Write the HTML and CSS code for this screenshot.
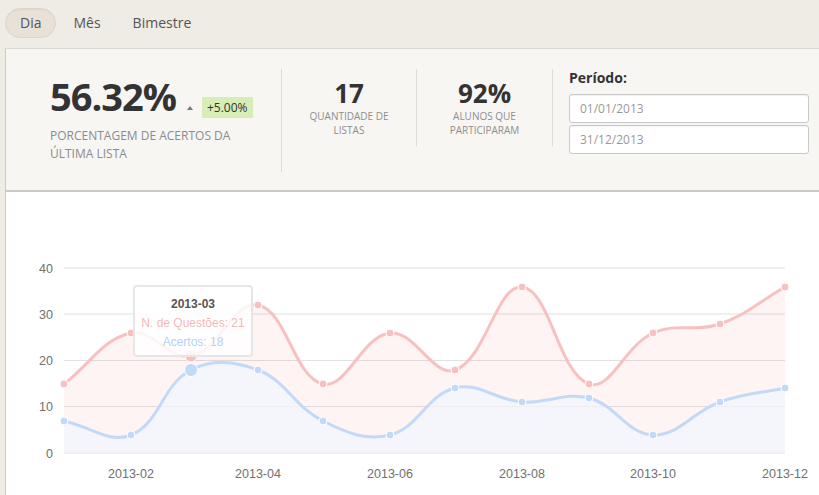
FILE: index.html
```html
<!DOCTYPE html>
<html lang="pt-BR">
<head>
<meta charset="utf-8">
<title>Desempenho</title>
<link rel="stylesheet" href="styles.css">
</head>
<body>
<nav class="tabs">
  <a class="tab active">Dia</a>
  <a class="tab">Mês</a>
  <a class="tab">Bimestre</a>
</nav>
<main class="card">
  <section class="summary">
    <div class="stat-main">
      <div class="main-row">
        <span class="big">56.32%</span>
        <span class="caret"></span>
        <span class="badge">+5.00%</span>
      </div>
      <p class="main-label">Porcentagem de acertos da última lista</p>
    </div>
    <div class="stat-small">
      <div class="num">17</div>
      <p class="small-label">Quantidade de listas</p>
    </div>
    <div class="stat-small wide">
      <div class="num">92%</div>
      <p class="small-label">Alunos que participaram</p>
    </div>
    <div class="period">
      <label class="period-label">Período:</label>
      <input class="date" type="text" value="01/01/2013">
      <input class="date" type="text" value="31/12/2013">
    </div>
  </section>
  <section class="chart">
    <svg class="plot" width="813" height="303" viewBox="6 192 813 303" xmlns="http://www.w3.org/2000/svg">
      <g class="grid">
        <line x1="64" y1="268" x2="785" y2="268"/>
        <line x1="64" y1="314" x2="785" y2="314"/>
        <line x1="64" y1="360.5" x2="785" y2="360.5"/>
        <line x1="64" y1="406.5" x2="785" y2="406.5"/>
        <line x1="64" y1="453" x2="785" y2="453"/>
      </g>
      <g class="axis-label y-labels">
        <text x="53" y="272.5">40</text>
        <text x="53" y="318.5">30</text>
        <text x="53" y="365">20</text>
        <text x="53" y="411">10</text>
        <text x="53" y="457.5">0</text>
      </g>
      <g class="axis-label x-labels">
        <text x="131" y="477.5">2013-02</text>
        <text x="258" y="477.5">2013-04</text>
        <text x="390" y="477.5">2013-06</text>
        <text x="522" y="477.5">2013-08</text>
        <text x="653" y="477.5">2013-10</text>
        <text x="785" y="477.5">2013-12</text>
      </g>
      <path class="fill-pink" d="M64,384 C90.8,363.6 102.2,339.4 131,333 C153,328.2 169,360.9 191,356 C219.8,349.6 234.2,299.9 258,305 C287,311.1 294,377.9 323,384 C346.8,389.1 362,336 390,333 C414.8,330.4 433.2,377.6 455,370 C486,359.2 496.5,284.3 522,287 C550.1,289.9 558.1,373.1 589,384 C610.5,391.5 624.3,346.1 653,333 C676.7,322.1 694.9,332.7 720,324 C747.7,314.3 759,301.8 785,287 L785,453 L64,453 Z"/>
      <path class="fill-blue" d="M64,421 C90.8,426.6 108.9,443.9 131,435 C159.7,423.5 162.1,384.8 191,370 C212.9,358.8 234.4,360.9 258,370 C287.2,381.3 294.1,406.8 323,421 C346.9,432.8 365.7,441.1 390,435 C418.5,427.9 426.5,395.1 455,388 C479.3,381.9 494.9,400 522,402 C548.5,404 564.1,391.7 589,398 C616.5,404.9 626.9,434.2 653,435 C679.3,435.8 692.1,411.9 720,402 C744.9,393.1 759,393.6 785,388 L785,453 L64,453 Z"/>
      <path class="line-pink" d="M64,384 C90.8,363.6 102.2,339.4 131,333 C153,328.2 169,360.9 191,356 C219.8,349.6 234.2,299.9 258,305 C287,311.1 294,377.9 323,384 C346.8,389.1 362,336 390,333 C414.8,330.4 433.2,377.6 455,370 C486,359.2 496.5,284.3 522,287 C550.1,289.9 558.1,373.1 589,384 C610.5,391.5 624.3,346.1 653,333 C676.7,322.1 694.9,332.7 720,324 C747.7,314.3 759,301.8 785,287"/>
      <path class="line-blue" d="M64,421 C90.8,426.6 108.9,443.9 131,435 C159.7,423.5 162.1,384.8 191,370 C212.9,358.8 234.4,360.9 258,370 C287.2,381.3 294.1,406.8 323,421 C346.9,432.8 365.7,441.1 390,435 C418.5,427.9 426.5,395.1 455,388 C479.3,381.9 494.9,400 522,402 C548.5,404 564.1,391.7 589,398 C616.5,404.9 626.9,434.2 653,435 C679.3,435.8 692.1,411.9 720,402 C744.9,393.1 759,393.6 785,388"/>
      <g class="pts-pink">
        <circle cx="64" cy="384" r="4"/>
        <circle cx="131" cy="333" r="4"/>
        <circle cx="191" cy="356" r="6"/>
        <circle cx="258" cy="305" r="4"/>
        <circle cx="323" cy="384" r="4"/>
        <circle cx="390" cy="333" r="4"/>
        <circle cx="455" cy="370" r="4"/>
        <circle cx="522" cy="287" r="4"/>
        <circle cx="589" cy="384" r="4"/>
        <circle cx="653" cy="333" r="4"/>
        <circle cx="720" cy="324" r="4"/>
        <circle cx="785" cy="287" r="4"/>
      </g>
      <g class="pts-blue">
        <circle cx="64" cy="421" r="4"/>
        <circle cx="131" cy="435" r="4"/>
        <circle cx="191" cy="370" r="6.5"/>
        <circle cx="258" cy="370" r="4"/>
        <circle cx="323" cy="421" r="4"/>
        <circle cx="390" cy="435" r="4"/>
        <circle cx="455" cy="388" r="4"/>
        <circle cx="522" cy="402" r="4"/>
        <circle cx="589" cy="398" r="4"/>
        <circle cx="653" cy="435" r="4"/>
        <circle cx="720" cy="402" r="4"/>
        <circle cx="785" cy="388" r="4"/>
      </g>
    </svg>
    <div class="tooltip">
      <div class="tt-title">2013-03</div>
      <div class="tt-pink">N. de Questões: 21</div>
      <div class="tt-blue">Acertos: 18</div>
    </div>
  </section>
</main>
</body>
</html>
```

FILE: styles.css
```css
html, body {
  margin: 0;
  padding: 0;
}
body {
  width: 819px;
  height: 495px;
  overflow: hidden;
  background: #efebe5;
  font-family: "Open Sans", "Liberation Sans", sans-serif;
  color: #333;
}

/* tabs */
.tabs {
  display: flex;
  gap: 2px;
  padding: 8px 0 0 5px;
  height: 30px;
}
.tab {
  box-sizing: border-box;
  height: 30px;
  padding: 0 14px 1px;
  border: 1px solid transparent;
  border-radius: 15px;
  font-size: 14px;
  line-height: 27px;
  color: #555;
}
.tab.active {
  background: #e7e1d8;
  border-color: #ddd6cb;
  box-shadow: inset 0 1px 2px rgba(0, 0, 0, 0.05);
}

/* card */
.card {
  display: block;
  margin: 10px 0 0 5px;
  height: 447px;
  background: #fff;
  border-left: 1px solid #cfcac3;
  border-top: 1px solid #dcd8d1;
}

.summary {
  box-sizing: border-box;
  display: flex;
  align-items: flex-start;
  height: 143px;
  padding: 20px 0 0 44px;
  background: #f7f6f3;
  border-bottom: 2px solid #cccac6;
}

.stat-main {
  box-sizing: border-box;
  width: 232px;
  padding: 3px 40px 9px 0;
  border-right: 1px solid #dedad4;
}
.main-row {
  display: flex;
  align-items: flex-end;
}
.big {
  font-size: 38px;
  font-weight: 700;
  line-height: 48px;
  letter-spacing: -1px;
  color: #333;
}
.caret {
  width: 0;
  height: 0;
  margin: 0 9px 10px 11px;
  border-left: 3.5px solid transparent;
  border-right: 3.5px solid transparent;
  border-bottom: 4px solid #777;
}
.badge {
  margin-bottom: 2px;
  padding: 0 5px;
  background: #d6eeb6;
  font-size: 12px;
  line-height: 21px;
  color: #333;
}
.main-label {
  margin: 7px 0 0;
  font-size: 12px;
  line-height: 18px;
  text-transform: uppercase;
  color: #8c8c8c;
}

.stat-small {
  box-sizing: border-box;
  width: 135px;
  padding: 9px 22px 9px;
  text-align: center;
  border-right: 1px solid #dedad4;
}
.stat-small.wide {
  width: 136px;
}
.num {
  font-size: 26px;
  font-weight: 700;
  line-height: 30px;
  color: #333;
}
.small-label {
  margin: 1px 0 0;
  font-size: 10px;
  line-height: 14px;
  text-transform: uppercase;
  color: #8e8e8e;
}

.period {
  display: flex;
  flex-direction: column;
  gap: 2px;
  padding-left: 16px;
}
.period-label {
  margin-bottom: 5px;
  font-size: 14px;
  font-weight: 700;
  line-height: 18px;
  color: #333;
}
.date {
  box-sizing: border-box;
  width: 240px;
  height: 29px;
  margin: 0;
  padding: 0 10px;
  border: 1px solid #c9c9c9;
  border-radius: 3px;
  background: #fff;
  box-shadow: inset 0 1px 1px rgba(0, 0, 0, 0.06);
  font-family: "Open Sans", "Liberation Sans", sans-serif;
  font-size: 12px;
  color: #999;
}

/* chart */
.chart {
  position: relative;
  height: 303px;
}
.plot {
  display: block;
}
.grid line {
  stroke: #e2e2e2;
  stroke-width: 1.2;
}
.axis-label text {
  font-family: "Liberation Sans", Arial, sans-serif;
  font-size: 12.5px;
  fill: #707070;
}
.y-labels text {
  text-anchor: end;
}
.x-labels text {
  text-anchor: middle;
}
.fill-pink {
  fill: rgba(247, 70, 74, 0.06);
}
.fill-blue {
  fill: rgba(241, 247, 254, 0.7);
}
.line-pink {
  fill: none;
  stroke: #f8c1c1;
  stroke-width: 3;
}
.line-blue {
  fill: none;
  stroke: #c2d9f8;
  stroke-width: 3;
}
.pts-pink circle {
  fill: #f8c1c1;
  stroke: #fff;
  stroke-width: 1;
}
.pts-blue circle {
  fill: #c2d9f8;
  stroke: #fff;
  stroke-width: 1;
}

.tooltip {
  position: absolute;
  left: 127px;
  top: 93px;
  box-sizing: border-box;
  width: 120px;
  height: 72px;
  padding: 8px 0 3px;
  border: 2px solid #e6e6e6;
  border-radius: 4px;
  background: rgba(255, 255, 255, 0.82);
  text-align: center;
  font-family: "Liberation Sans", Arial, sans-serif;
  font-size: 12px;
  line-height: 19px;
}
.tt-title {
  font-weight: 700;
  color: #555;
}
.tt-pink {
  color: #f6b7b7;
}
.tt-blue {
  color: #b6d1f5;
}
```
